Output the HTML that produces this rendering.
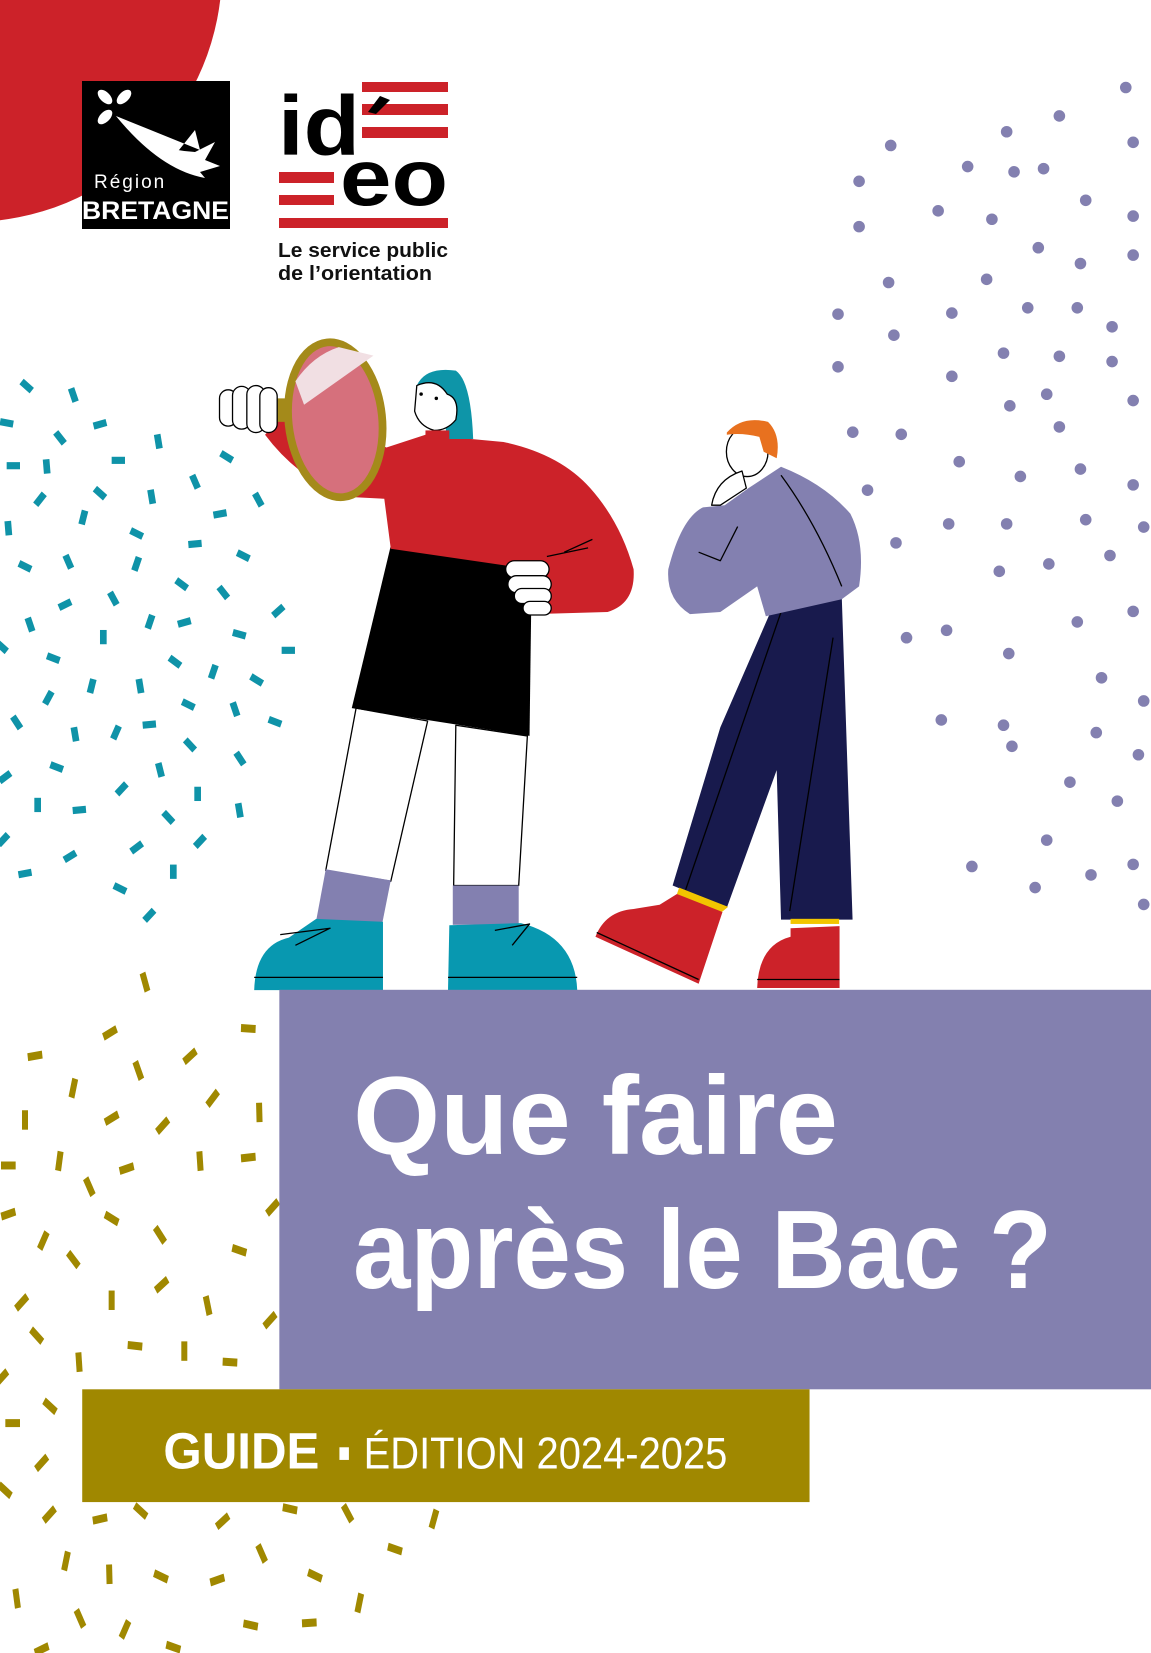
<!DOCTYPE html>
<html><head><meta charset="utf-8"><style>
html,body{margin:0;padding:0;background:#fff;}
svg{display:block;}
</style></head><body>
<svg width="1151" height="1653" viewBox="0 0 1151 1653" xmlns="http://www.w3.org/2000/svg" font-family="Liberation Sans, sans-serif">
<rect width="1151" height="1653" fill="#fff"/>
<!-- red quarter circle -->
<circle cx="-30" cy="-30" r="252" fill="#cc2229"/>

<!-- Bretagne logo -->
<rect x="82" y="81" width="148" height="148" fill="#000"/>
<g fill="#fff">
<ellipse cx="105" cy="97" rx="9" ry="5" transform="rotate(45 105 97)"/>
<ellipse cx="124" cy="97" rx="9" ry="5" transform="rotate(-45 124 97)"/>
<ellipse cx="105" cy="117" rx="9" ry="5" transform="rotate(-45 105 117)"/>
<path d="M116 116 Q150 150 195 152 L215 142 L205 160 L220 166 L200 172 L205 178 Q160 170 116 116 Z"/>
<path d="M116 116 Q140 145 175 155 L195 130 L200 150 Z"/>
</g>
<text x="94" y="188" fill="#fff" font-size="19" letter-spacing="2">Région</text>
<text x="82" y="219" fill="#fff" font-size="25" font-weight="bold" textLength="147" lengthAdjust="spacingAndGlyphs">BRETAGNE</text>

<!-- ideo logo -->
<g fill="#cc2229">
<rect x="362" y="82" width="86" height="10"/>
<rect x="362" y="104" width="86" height="11"/>
<rect x="362" y="127" width="86" height="11"/>
<rect x="279" y="172" width="55" height="11"/>
<rect x="279" y="195" width="55" height="10"/>
<rect x="279" y="218" width="169" height="10"/>
</g>
<text x="278" y="155" font-size="84" font-weight="bold" textLength="82" lengthAdjust="spacingAndGlyphs" fill="#000">id</text>
<path d="M368 112 L380 96 L390 100 L376 114 Z" fill="#000"/>
<text x="340" y="205" font-size="80" font-weight="bold" textLength="108" lengthAdjust="spacingAndGlyphs" fill="#000">eo</text>
<text x="278" y="257" font-size="20" font-weight="bold" textLength="170" lengthAdjust="spacingAndGlyphs" fill="#111">Le service public</text>
<text x="278" y="280" font-size="20" font-weight="bold" textLength="154" lengthAdjust="spacingAndGlyphs" fill="#111">de l’orientation</text>

<!-- purple dots (view coords) -->
<g transform="scale(1.0541)" fill="#8380b0">
<circle cx="1005" cy="110" r="5.5"/><circle cx="845" cy="138" r="5.5"/><circle cx="1068" cy="83" r="5.5"/><circle cx="955" cy="125" r="5.5"/><circle cx="1075" cy="135" r="5.5"/><circle cx="918" cy="158" r="5.5"/><circle cx="962" cy="163" r="5.5"/><circle cx="990" cy="160" r="5.5"/><circle cx="815" cy="172" r="5.5"/><circle cx="1030" cy="190" r="5.5"/><circle cx="890" cy="200" r="5.5"/><circle cx="941" cy="208" r="5.5"/><circle cx="815" cy="215" r="5.5"/><circle cx="1075" cy="205" r="5.5"/><circle cx="985" cy="235" r="5.5"/><circle cx="1025" cy="250" r="5.5"/><circle cx="936" cy="265" r="5.5"/><circle cx="1075" cy="242" r="5.5"/><circle cx="843" cy="268" r="5.5"/><circle cx="795" cy="298" r="5.5"/><circle cx="903" cy="297" r="5.5"/><circle cx="975" cy="292" r="5.5"/><circle cx="1022" cy="292" r="5.5"/><circle cx="848" cy="318" r="5.5"/><circle cx="1055" cy="310" r="5.5"/><circle cx="952" cy="335" r="5.5"/><circle cx="1005" cy="338" r="5.5"/><circle cx="795" cy="348" r="5.5"/><circle cx="903" cy="357" r="5.5"/><circle cx="1055" cy="343" r="5.5"/><circle cx="993" cy="374" r="5.5"/><circle cx="958" cy="385" r="5.5"/><circle cx="1075" cy="380" r="5.5"/><circle cx="809" cy="410" r="5.5"/><circle cx="855" cy="412" r="5.5"/><circle cx="1005" cy="405" r="5.5"/><circle cx="910" cy="438" r="5.5"/><circle cx="968" cy="452" r="5.5"/><circle cx="1025" cy="445" r="5.5"/><circle cx="823" cy="465" r="5.5"/><circle cx="1075" cy="460" r="5.5"/><circle cx="1030" cy="493" r="5.5"/><circle cx="955" cy="497" r="5.5"/><circle cx="900" cy="497" r="5.5"/><circle cx="850" cy="515" r="5.5"/><circle cx="1085" cy="500" r="5.5"/><circle cx="1053" cy="527" r="5.5"/><circle cx="948" cy="542" r="5.5"/><circle cx="995" cy="535" r="5.5"/><circle cx="1022" cy="590" r="5.5"/><circle cx="898" cy="598" r="5.5"/><circle cx="860" cy="605" r="5.5"/><circle cx="1075" cy="580" r="5.5"/><circle cx="957" cy="620" r="5.5"/><circle cx="1045" cy="643" r="5.5"/><circle cx="1085" cy="665" r="5.5"/><circle cx="893" cy="683" r="5.5"/><circle cx="952" cy="688" r="5.5"/><circle cx="960" cy="708" r="5.5"/><circle cx="1040" cy="695" r="5.5"/><circle cx="1080" cy="716" r="5.5"/><circle cx="1015" cy="742" r="5.5"/><circle cx="1060" cy="760" r="5.5"/><circle cx="993" cy="797" r="5.5"/><circle cx="922" cy="822" r="5.5"/><circle cx="1035" cy="830" r="5.5"/><circle cx="1075" cy="820" r="5.5"/><circle cx="982" cy="842" r="5.5"/><circle cx="1085" cy="858" r="5.5"/>
</g>

<!-- teal dashes -->
<g transform="translate(0,370) scale(0.3333,0.3571)" fill="#0f93a8">
<rect x="-20" y="-10" width="40" height="20" transform="translate(80,45) rotate(40)"/>
<rect x="-20" y="-10" width="40" height="20" transform="translate(220,70) rotate(70)"/>
<rect x="-20" y="-10" width="40" height="20" transform="translate(20,148) rotate(10)"/>
<rect x="-20" y="-10" width="40" height="20" transform="translate(300,152) rotate(-15)"/>
<rect x="-20" y="-10" width="40" height="20" transform="translate(180,190) rotate(50)"/>
<rect x="-20" y="-10" width="40" height="20" transform="translate(475,200) rotate(80)"/>
<rect x="-20" y="-10" width="40" height="20" transform="translate(40,268) rotate(0)"/>
<rect x="-20" y="-10" width="40" height="20" transform="translate(140,270) rotate(85)"/>
<rect x="-20" y="-10" width="40" height="20" transform="translate(355,253) rotate(0)"/>
<rect x="-20" y="-10" width="40" height="20" transform="translate(680,243) rotate(30)"/>
<rect x="-20" y="-10" width="40" height="20" transform="translate(585,313) rotate(65)"/>
<rect x="-20" y="-10" width="40" height="20" transform="translate(300,345) rotate(40)"/>
<rect x="-20" y="-10" width="40" height="20" transform="translate(120,362) rotate(-50)"/>
<rect x="-20" y="-10" width="40" height="20" transform="translate(455,355) rotate(80)"/>
<rect x="-20" y="-10" width="40" height="20" transform="translate(775,363) rotate(60)"/>
<rect x="-20" y="-10" width="40" height="20" transform="translate(25,443) rotate(85)"/>
<rect x="-20" y="-10" width="40" height="20" transform="translate(250,413) rotate(-75)"/>
<rect x="-20" y="-10" width="40" height="20" transform="translate(660,403) rotate(-10)"/>
<rect x="-20" y="-10" width="40" height="20" transform="translate(410,458) rotate(25)"/>
<rect x="-20" y="-10" width="40" height="20" transform="translate(585,487) rotate(-5)"/>
<rect x="-20" y="-10" width="40" height="20" transform="translate(730,520) rotate(25)"/>
<rect x="-20" y="-10" width="40" height="20" transform="translate(75,550) rotate(25)"/>
<rect x="-20" y="-10" width="40" height="20" transform="translate(205,537) rotate(65)"/>
<rect x="-20" y="-10" width="40" height="20" transform="translate(410,543) rotate(-70)"/>
<rect x="-20" y="-10" width="40" height="20" transform="translate(545,600) rotate(35)"/>
<rect x="-20" y="-10" width="40" height="20" transform="translate(670,623) rotate(50)"/>
<rect x="-20" y="-10" width="40" height="20" transform="translate(340,640) rotate(60)"/>
<rect x="-20" y="-10" width="40" height="20" transform="translate(195,657) rotate(-25)"/>
<rect x="-20" y="-10" width="40" height="20" transform="translate(835,675) rotate(-40)"/>
<rect x="-20" y="-10" width="40" height="20" transform="translate(90,713) rotate(70)"/>
<rect x="-20" y="-10" width="40" height="20" transform="translate(450,705) rotate(-70)"/>
<rect x="-20" y="-10" width="40" height="20" transform="translate(553,707) rotate(-15)"/>
<rect x="-20" y="-10" width="40" height="20" transform="translate(310,748) rotate(90)"/>
<rect x="-20" y="-10" width="40" height="20" transform="translate(718,740) rotate(15)"/>
<rect x="-20" y="-10" width="40" height="20" transform="translate(865,785) rotate(0)"/>
<rect x="-20" y="-10" width="40" height="20" transform="translate(160,807) rotate(20)"/>
<rect x="-20" y="-10" width="40" height="20" transform="translate(525,817) rotate(35)"/>
<rect x="-20" y="-10" width="40" height="20" transform="translate(640,845) rotate(-70)"/>
<rect x="-20" y="-10" width="40" height="20" transform="translate(770,868) rotate(30)"/>
<rect x="-20" y="-10" width="40" height="20" transform="translate(275,885) rotate(-75)"/>
<rect x="-20" y="-10" width="40" height="20" transform="translate(420,885) rotate(80)"/>
<rect x="-20" y="-10" width="40" height="20" transform="translate(145,918) rotate(-60)"/>
<rect x="-20" y="-10" width="40" height="20" transform="translate(565,937) rotate(25)"/>
<rect x="-20" y="-10" width="40" height="20" transform="translate(705,950) rotate(70)"/>
<rect x="-20" y="-10" width="40" height="20" transform="translate(50,987) rotate(55)"/>
<rect x="-20" y="-10" width="40" height="20" transform="translate(825,985) rotate(20)"/>
<rect x="-20" y="-10" width="40" height="20" transform="translate(225,1020) rotate(80)"/>
<rect x="-20" y="-10" width="40" height="20" transform="translate(348,1015) rotate(-65)"/>
<rect x="-20" y="-10" width="40" height="20" transform="translate(448,993) rotate(-5)"/>
<rect x="-20" y="-10" width="40" height="20" transform="translate(570,1050) rotate(45)"/>
<rect x="-20" y="-10" width="40" height="20" transform="translate(170,1112) rotate(20)"/>
<rect x="-20" y="-10" width="40" height="20" transform="translate(480,1120) rotate(75)"/>
<rect x="-20" y="-10" width="40" height="20" transform="translate(720,1088) rotate(55)"/>
<rect x="-20" y="-10" width="40" height="20" transform="translate(365,1173) rotate(-45)"/>
<rect x="-20" y="-10" width="40" height="20" transform="translate(593,1187) rotate(90)"/>
<rect x="-20" y="-10" width="40" height="20" transform="translate(113,1218) rotate(90)"/>
<rect x="-20" y="-10" width="40" height="20" transform="translate(238,1232) rotate(-5)"/>
<rect x="-20" y="-10" width="40" height="20" transform="translate(505,1253) rotate(45)"/>
<rect x="-20" y="-10" width="40" height="20" transform="translate(718,1233) rotate(80)"/>
<rect x="-20" y="-10" width="40" height="20" transform="translate(10,1315) rotate(-45)"/>
<rect x="-20" y="-10" width="40" height="20" transform="translate(600,1320) rotate(-45)"/>
<rect x="-20" y="-10" width="40" height="20" transform="translate(410,1337) rotate(-35)"/>
<rect x="-20" y="-10" width="40" height="20" transform="translate(210,1362) rotate(-30)"/>
<rect x="-20" y="-10" width="40" height="20" transform="translate(75,1410) rotate(-10)"/>
<rect x="-20" y="-10" width="40" height="20" transform="translate(520,1405) rotate(90)"/>
<rect x="-20" y="-10" width="40" height="20" transform="translate(360,1452) rotate(25)"/>
<rect x="-20" y="-10" width="40" height="20" transform="translate(448,1527) rotate(-45)"/>
<rect x="-20" y="-10" width="40" height="20" transform="translate(15,1140) rotate(-35)"/>
<rect x="-20" y="-10" width="40" height="20" transform="translate(5,775) rotate(40)"/>
</g>

<!-- gold dashes -->
<g transform="translate(0,960) scale(0.3333,0.4419)" fill="#a08800">
<rect x="-22" y="-9" width="44" height="18" transform="translate(435,50) rotate(70)"/>
<rect x="-22" y="-9" width="44" height="18" transform="translate(330,165) rotate(-25)"/>
<rect x="-22" y="-9" width="44" height="18" transform="translate(105,217) rotate(-8)"/>
<rect x="-22" y="-9" width="44" height="18" transform="translate(745,155) rotate(3)"/>
<rect x="-22" y="-9" width="44" height="18" transform="translate(570,218) rotate(-35)"/>
<rect x="-22" y="-9" width="44" height="18" transform="translate(415,250) rotate(65)"/>
<rect x="-22" y="-9" width="44" height="18" transform="translate(220,290) rotate(-75)"/>
<rect x="-22" y="-9" width="44" height="18" transform="translate(75,362) rotate(90)"/>
<rect x="-22" y="-9" width="44" height="18" transform="translate(335,358) rotate(-25)"/>
<rect x="-22" y="-9" width="44" height="18" transform="translate(488,375) rotate(-40)"/>
<rect x="-22" y="-9" width="44" height="18" transform="translate(638,313) rotate(-45)"/>
<rect x="-22" y="-9" width="44" height="18" transform="translate(778,345) rotate(88)"/>
<rect x="-22" y="-9" width="44" height="18" transform="translate(25,465) rotate(0)"/>
<rect x="-22" y="-9" width="44" height="18" transform="translate(178,455) rotate(-80)"/>
<rect x="-22" y="-9" width="44" height="18" transform="translate(380,472) rotate(-15)"/>
<rect x="-22" y="-9" width="44" height="18" transform="translate(600,455) rotate(85)"/>
<rect x="-22" y="-9" width="44" height="18" transform="translate(745,447) rotate(-5)"/>
<rect x="-22" y="-9" width="44" height="18" transform="translate(268,513) rotate(60)"/>
<rect x="-22" y="-9" width="44" height="18" transform="translate(25,575) rotate(-15)"/>
<rect x="-22" y="-9" width="44" height="18" transform="translate(335,585) rotate(25)"/>
<rect x="-22" y="-9" width="44" height="18" transform="translate(480,622) rotate(50)"/>
<rect x="-22" y="-9" width="44" height="18" transform="translate(818,560) rotate(-40)"/>
<rect x="-22" y="-9" width="44" height="18" transform="translate(130,635) rotate(-60)"/>
<rect x="-22" y="-9" width="44" height="18" transform="translate(220,678) rotate(45)"/>
<rect x="-22" y="-9" width="44" height="18" transform="translate(718,657) rotate(15)"/>
<rect x="-22" y="-9" width="44" height="18" transform="translate(485,735) rotate(-35)"/>
<rect x="-22" y="-9" width="44" height="18" transform="translate(65,775) rotate(-40)"/>
<rect x="-22" y="-9" width="44" height="18" transform="translate(335,770) rotate(90)"/>
<rect x="-22" y="-9" width="44" height="18" transform="translate(623,782) rotate(75)"/>
<rect x="-22" y="-9" width="44" height="18" transform="translate(810,815) rotate(-40)"/>
<rect x="-22" y="-9" width="44" height="18" transform="translate(110,850) rotate(40)"/>
<rect x="-22" y="-9" width="44" height="18" transform="translate(405,873) rotate(5)"/>
<rect x="-22" y="-9" width="44" height="18" transform="translate(553,885) rotate(90)"/>
<rect x="-22" y="-9" width="44" height="18" transform="translate(690,910) rotate(3)"/>
<rect x="-22" y="-9" width="44" height="18" transform="translate(237,910) rotate(85)"/>
<rect x="-22" y="-9" width="44" height="18" transform="translate(5,945) rotate(-40)"/>
<rect x="-22" y="-9" width="44" height="18" transform="translate(150,1010) rotate(35)"/>
<rect x="-22" y="-9" width="44" height="18" transform="translate(38,1048) rotate(0)"/>
<rect x="-22" y="-9" width="44" height="18" transform="translate(125,1138) rotate(-40)"/>
<rect x="-22" y="-9" width="44" height="18" transform="translate(15,1200) rotate(35)"/>
<rect x="-22" y="-9" width="44" height="18" transform="translate(148,1255) rotate(-40)"/>
<rect x="-22" y="-9" width="44" height="18" transform="translate(300,1265) rotate(-10)"/>
<rect x="-22" y="-9" width="44" height="18" transform="translate(422,1247) rotate(35)"/>
<rect x="-22" y="-9" width="44" height="18" transform="translate(668,1270) rotate(-35)"/>
<rect x="-22" y="-9" width="44" height="18" transform="translate(870,1242) rotate(10)"/>
<rect x="-22" y="-9" width="44" height="18" transform="translate(1043,1252) rotate(55)"/>
<rect x="-22" y="-9" width="44" height="18" transform="translate(1302,1265) rotate(-70)"/>
<rect x="-22" y="-9" width="44" height="18" transform="translate(1185,1333) rotate(15)"/>
<rect x="-22" y="-9" width="44" height="18" transform="translate(198,1360) rotate(-75)"/>
<rect x="-22" y="-9" width="44" height="18" transform="translate(328,1390) rotate(88)"/>
<rect x="-22" y="-9" width="44" height="18" transform="translate(483,1395) rotate(20)"/>
<rect x="-22" y="-9" width="44" height="18" transform="translate(652,1403) rotate(-15)"/>
<rect x="-22" y="-9" width="44" height="18" transform="translate(785,1343) rotate(60)"/>
<rect x="-22" y="-9" width="44" height="18" transform="translate(945,1393) rotate(20)"/>
<rect x="-22" y="-9" width="44" height="18" transform="translate(1078,1455) rotate(-75)"/>
<rect x="-22" y="-9" width="44" height="18" transform="translate(50,1445) rotate(80)"/>
<rect x="-22" y="-9" width="44" height="18" transform="translate(240,1490) rotate(60)"/>
<rect x="-22" y="-9" width="44" height="18" transform="translate(375,1515) rotate(-60)"/>
<rect x="-22" y="-9" width="44" height="18" transform="translate(752,1505) rotate(10)"/>
<rect x="-22" y="-9" width="44" height="18" transform="translate(928,1500) rotate(-3)"/>
<rect x="-22" y="-9" width="44" height="18" transform="translate(520,1555) rotate(15)"/>
<rect x="-22" y="-9" width="44" height="18" transform="translate(125,1560) rotate(-20)"/>
</g>

<!-- figures (zoom-2 coords) -->
<g transform="translate(200,330) scale(0.4336,0.4273)" stroke-linejoin="round">
<!-- woman legs -->
<path d="M360 885 L290 1265 L440 1290 L525 915 Z" fill="#fff" stroke="#000" stroke-width="3"/>
<path d="M590 925 L585 1300 L735 1300 L755 950 Z" fill="#fff" stroke="#000" stroke-width="3"/>
<path d="M290 1262 L440 1288 L420 1390 L268 1382 Z" fill="#8380b0"/>
<rect x="583" y="1300" width="152" height="92" fill="#8380b0"/>
<path d="M268 1378 L422 1385 L422 1545 L125 1545 Q128 1440 205 1422 Z" fill="#0898b0"/>
<path d="M575 1393 L740 1388 Q865 1420 870 1545 L572 1545 Z" fill="#0898b0"/>
<path d="M125 1515 H422 M572 1515 H870" stroke="#000" stroke-width="3"/>
<path d="M185 1415 L300 1400 L220 1440 M680 1405 L760 1390 L720 1440" stroke="#000" stroke-width="3" fill="none"/>
<!-- skirt -->
<path d="M440 505 L765 560 L760 950 L350 885 Z" fill="#000"/>
<!-- sweater -->
<path d="M150 245 L210 175 L430 275 L520 245 L700 262 Q830 290 900 370 Q970 450 1000 560 Q1005 640 940 660 L770 665 L765 560 L440 512 L425 395 L330 390 Q220 340 150 245 Z" fill="#cc2229"/>
<path d="M840 520 L905 490 M800 530 L895 510" stroke="#000" stroke-width="3" fill="none"/>
<!-- hair / face -->
<path d="M500 130 Q520 85 590 95 Q625 120 630 255 L570 255 L560 180 Z" fill="#0e95a8"/>
<path d="M500 130 Q545 110 570 150 Q600 160 590 210 Q570 235 540 235 Q505 225 495 190 Z" fill="#fff" stroke="#000" stroke-width="3"/>
<rect x="520" y="235" width="55" height="20" fill="#cc2229"/>
<circle cx="510" cy="150" r="4"/><circle cx="545" cy="160" r="4"/>
<!-- magnifier -->
<rect x="168" y="160" width="40" height="55" fill="#a48a1a"/>
<ellipse cx="312" cy="210" rx="108" ry="182" fill="#d6707c" stroke="#a48a1a" stroke-width="18" transform="rotate(-6 312 210)"/>
<path d="M220 120 Q260 60 320 40 L400 60 L240 175 Z" fill="#f1dfe3"/>
<!-- left fist -->
<g fill="#fff" stroke="#000" stroke-width="3">
<rect x="45" y="140" width="40" height="85" rx="20"/>
<rect x="75" y="132" width="42" height="100" rx="21"/>
<rect x="108" y="130" width="42" height="110" rx="21"/>
<rect x="138" y="135" width="40" height="105" rx="20"/>
</g>
<!-- right fist -->
<g fill="#fff" stroke="#000" stroke-width="3">
<rect x="705" y="540" width="100" height="40" rx="20"/>
<rect x="710" y="575" width="100" height="40" rx="20"/>
<rect x="725" y="605" width="85" height="35" rx="17"/>
<rect x="745" y="635" width="65" height="32" rx="16"/>
</g>
<!-- man pants -->
<path d="M1320 650 L1480 622 L1505 1380 L1340 1380 L1330 1030 L1215 1352 L1090 1300 L1200 930 Z" fill="#181a4d"/>
<path d="M1340 660 L1120 1310 M1460 720 L1360 1360" stroke="#000" stroke-width="3" fill="none"/>
<path d="M1105 1305 L1218 1350 L1200 1365 L1100 1320 Z" fill="#f2c500"/>
<rect x="1362" y="1378" width="112" height="12" fill="#f2c500"/>
<path d="M1100 1320 L1205 1362 L1150 1530 L912 1420 Q935 1360 1000 1355 L1060 1345 Z" fill="#cc2229"/>
<path d="M1362 1400 L1475 1395 L1475 1540 L1285 1540 Q1288 1440 1362 1420 Z" fill="#cc2229"/>
<path d="M915 1410 L1150 1520 M1285 1520 H1475" stroke="#000" stroke-width="3"/>
<!-- man jacket -->
<path d="M1265 370 L1340 320 Q1440 360 1500 430 Q1535 500 1520 600 L1480 630 L1305 670 L1285 600 L1200 660 L1130 665 Q1075 630 1080 560 Q1110 440 1160 415 L1210 410 Z" fill="#8380b0"/>
<path d="M1340 340 Q1420 450 1480 600 M1150 520 L1200 540 L1240 460" stroke="#000" stroke-width="3" fill="none"/>
<!-- man head -->
<ellipse cx="1262" cy="285" rx="48" ry="58" fill="#fff" stroke="#000" stroke-width="3"/>
<path d="M1215 240 Q1250 200 1310 215 Q1340 245 1330 300 L1300 285 L1290 250 Q1250 240 1215 245 Z" fill="#e8711f"/>
<path d="M1180 410 Q1190 350 1250 330 L1260 370 L1200 410 Z" fill="#fff" stroke="#000" stroke-width="3"/>
</g>

<!-- boxes & text (view coords) -->
<g transform="scale(1.0541)">
<rect x="265" y="939" width="827" height="379" fill="#8380af"/>
<rect x="78" y="1318" width="690" height="107" fill="#a08800"/>
<text x="335" y="1095" fill="#fff" font-size="106" font-weight="bold" textLength="460" lengthAdjust="spacingAndGlyphs">Que faire</text>
<text x="335" y="1222" fill="#fff" font-size="106" font-weight="bold" textLength="663" lengthAdjust="spacingAndGlyphs">après le Bac ?</text>
<text x="155" y="1393" fill="#fff" font-size="48" font-weight="bold" textLength="148" lengthAdjust="spacingAndGlyphs">GUIDE</text>
<rect x="322" y="1373" width="9" height="12" fill="#fff"/>
<text x="345" y="1393" fill="#fff" font-size="42" textLength="345" lengthAdjust="spacingAndGlyphs">ÉDITION 2024-2025</text>
</g>
</svg>
</body></html>
